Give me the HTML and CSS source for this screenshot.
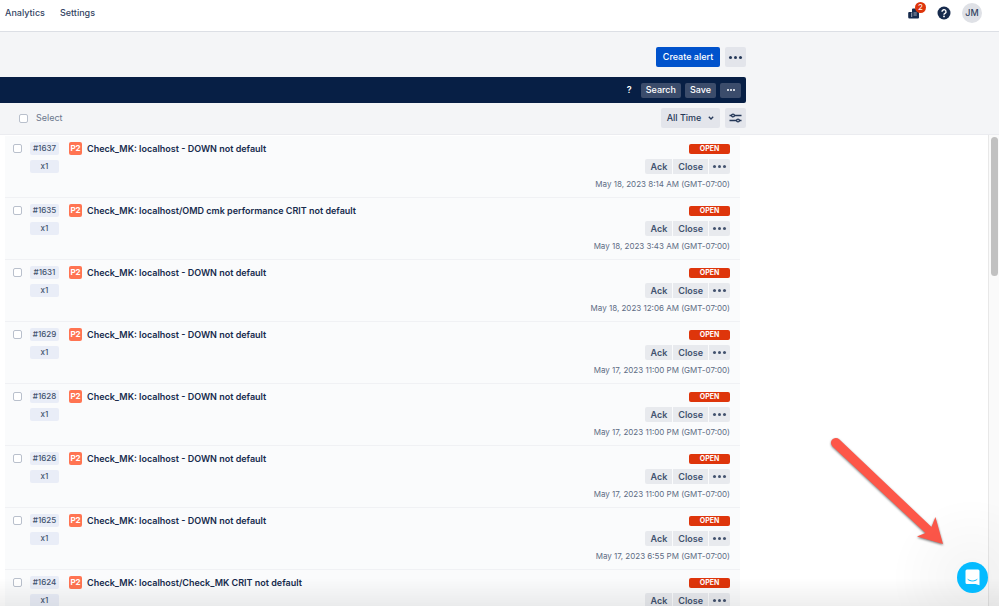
FILE: index.html
```html
<!DOCTYPE html>
<html lang="en">
<head>
  <meta charset="UTF-8">
  <title>Alerts</title>
  <link rel="stylesheet" href="styles.css">
</head>
<body>
  <header class="topbar">
    <nav class="nav">
      <a href="#">Analytics</a>
      <a href="#">Settings</a>
    </nav>
    <div class="user-area">
      <button class="icon-btn news" aria-label="What's new">
        <svg width="12" height="12" viewBox="0 0 12 12">
          <path fill="#172b4d" d="M4 2.500a1 1 0 0 1 1-1h5a1 1 0 0 1 1 1v8a1 1 0 0 1-1 1H1.500A1.300 1.300 0 0 1 .2 10.200V6a1 1 0 0 1 1-1H4z"/>
          <path stroke="#fff" stroke-width="0.600" fill="none" d="M3.700 5.500v4.500M5.500 6h3.300M5.500 8h3.300"/>
        </svg>
        <span class="count">2</span>
      </button>
      <button class="icon-btn" aria-label="Help">
        <svg width="14" height="14" viewBox="0 0 14 14">
          <circle cx="7" cy="7" r="6.500" fill="#172b4d"/>
          <path d="M5 5.700a2 2 0 1 1 3 1.700c-.7.4-1 .7-1 1.300" fill="none" stroke="#fff" stroke-width="1.400"/>
          <circle cx="7" cy="10.400" r="0.900" fill="#fff"/>
        </svg>
      </button>
      <button class="avatar">JM</button>
    </div>
  </header>

  <section class="toolbar">
    <div class="actions">
      <button class="btn primary">Create alert</button>
      <button class="btn square" aria-label="More"><span class="dots"></span></button>
    </div>
    <div class="searchbar">
      <button class="help">?</button>
      <button class="dark-btn">Search</button>
      <button class="dark-btn">Save</button>
      <button class="dark-btn more" aria-label="More"><span class="dots small"></span></button>
    </div>
    <div class="filters">
      <label class="select-all"><input type="checkbox"> Select</label>
      <button class="btn time">All Time
        <svg width="6" height="4" viewBox="0 0 6 4"><path d="M.8.800L3 3 5.200.800" fill="none" stroke="#253858" stroke-width="1.300"/></svg>
      </button>
      <button class="btn square" aria-label="Filters">
        <svg width="13" height="10" viewBox="0 0 13 10" fill="#e3e5eb" stroke="#253858" stroke-width="1.300">
          <path d="M.5 2.500h12M.5 7.500h12"/>
          <circle cx="4" cy="2.500" r="1.400"/>
          <circle cx="9" cy="7.500" r="1.400"/>
        </svg>
      </button>
    </div>
  </section>

  <main class="content">
    <ul class="alerts" id="alerts"></ul>
    <div class="scrollbar"><div class="thumb"></div></div>
  </main>

  <svg class="arrow" width="120" height="116" viewBox="0 0 120 116">
    <path fill="#fd5749" d="M9.200 3.200 101.500 91 105.400 81 113 108 87 100.500 95.500 97 2.600 10.500A4.800 4.800 0 0 1 9.200 3.200z"/>
  </svg>
  <div class="fade"></div>
  <button class="chat" aria-label="Open chat">
    <svg width="15" height="17" viewBox="0 0 15 17">
      <path fill="#fff" d="M2 .5h11A1.500 1.500 0 0 1 14.500 2v14.300L10.500 15H2A1.500 1.500 0 0 1 .5 13.500V2A1.500 1.500 0 0 1 2 .5z"/>
      <path d="M3 10.500c2.600 2 6.400 2 9 0" fill="none" stroke="#05bbff" stroke-width="1" stroke-linecap="round"/>
    </svg>
  </button>

  <script>
    const alerts = [
      { id: 1637, title: "Check_MK: localhost - DOWN not default", date: "May 18, 2023 8:14 AM" },
      { id: 1635, title: "Check_MK: localhost/OMD cmk performance CRIT not default", date: "May 18, 2023 3:43 AM" },
      { id: 1631, title: "Check_MK: localhost - DOWN not default", date: "May 18, 2023 12:06 AM" },
      { id: 1629, title: "Check_MK: localhost - DOWN not default", date: "May 17, 2023 11:00 PM" },
      { id: 1628, title: "Check_MK: localhost - DOWN not default", date: "May 17, 2023 11:00 PM" },
      { id: 1626, title: "Check_MK: localhost - DOWN not default", date: "May 17, 2023 11:00 PM" },
      { id: 1625, title: "Check_MK: localhost - DOWN not default", date: "May 17, 2023 6:55 PM" },
      { id: 1624, title: "Check_MK: localhost/Check_MK CRIT not default", date: "May 17, 2023 6:55 PM" }
    ];

    document.getElementById("alerts").innerHTML = alerts.map(a => `
      <li class="alert">
        <input type="checkbox" aria-label="Select alert ${a.id}">
        <div class="tags">
          <span class="tag">#${a.id}</span>
          <span class="tag">x1</span>
        </div>
        <span class="priority">P2</span>
        <span class="title">${a.title}</span>
        <div class="side">
          <span class="status">OPEN</span>
          <div class="row-actions">
            <button>Ack</button>
            <button>Close</button>
            <button aria-label="More"><span class="dots"></span></button>
          </div>
          <span class="date">${a.date} (GMT-07:00)</span>
        </div>
      </li>`).join("");
  </script>
</body>
</html>
```
FILE: styles.css
```css
* {
  box-sizing: border-box;
}
body {
  margin: 0;
  height: 100vh;
  display: flex;
  flex-direction: column;
  overflow: hidden;
  background: #fff;
  color: #172b4d;
  font-family: Inter, "Liberation Sans", sans-serif;
  font-size: 9px;
  line-height: 12px;
}
button {
  border: 0;
  padding: 0;
  background: none;
  color: inherit;
  font: inherit;
  cursor: pointer;
  display: flex;
  align-items: center;
  justify-content: center;
}
input[type="checkbox"] {
  appearance: none;
  flex: none;
  width: 9px;
  height: 9px;
  margin: 0;
  border: 1px solid #b9c0cc;
  border-radius: 2px;
  background: #fff;
}

/* top navigation */
.topbar {
  flex: none;
  display: flex;
  justify-content: space-between;
  height: 32px;
  padding: 0 17px 5px 5px;
  border-bottom: 1px solid #dcdfe5;
}
.nav, .user-area {
  display: flex;
  align-items: center;
}
.nav {
  gap: 15px;
}
.nav a {
  color: #344563;
  font-weight: 500;
  text-decoration: none;
}
.user-area {
  gap: 11px;
}
.icon-btn {
  position: relative;
}
.news {
  margin-right: 6px;
}
.count {
  position: absolute;
  left: 7px;
  top: -5px;
  width: 11px;
  height: 11px;
  border-radius: 50%;
  background: #de350b;
  color: #fff;
  font-size: 8px;
  line-height: 11px;
}
.avatar {
  width: 20px;
  height: 20px;
  border-radius: 50%;
  background: #dfe1e6;
  color: #344563;
  font-weight: 500;
}

/* search and filters */
.toolbar {
  flex: none;
  padding: 15px 253px 6px 0;
  background: #f4f5f7;
  border-bottom: 1px solid #ebecf0;
}
.actions, .filters {
  display: flex;
  justify-content: flex-end;
  gap: 5px;
}
.btn {
  height: 20px;
  border-radius: 2px;
  background: #e3e5eb;
  color: #253858;
  font-weight: 500;
}
.primary {
  width: 64px;
  background: #0052cc;
  color: #fff;
}
.square {
  width: 21px;
}
.time {
  width: 59px;
  gap: 7px;
}
.dots {
  width: 3px;
  height: 3px;
  border-radius: 50%;
  background: currentColor;
  box-shadow: -5px 0 currentColor, 5px 0 currentColor;
}
.dots.small {
  width: 2px;
  height: 2px;
  box-shadow: -3px 0 currentColor, 3px 0 currentColor;
}
.searchbar {
  display: flex;
  align-items: center;
  justify-content: flex-end;
  gap: 4px;
  height: 26px;
  margin: 10px 0 5px;
  padding-right: 5px;
  border-radius: 0 2px 2px 0;
  background: #071f45;
  color: #fff;
}
.help {
  margin-right: 5px;
  font-weight: 600;
}
.dark-btn {
  height: 15px;
  padding: 0 5px;
  border-radius: 2px;
  background: #3b4c6b;
  font-weight: 500;
}
.dark-btn.more {
  width: 21px;
}
.select-all {
  display: flex;
  align-items: center;
  gap: 8px;
  margin-right: auto;
  padding-left: 19px;
  color: #6b778c;
}

/* alert list */
.content {
  flex: 1;
  min-height: 0;
  display: flex;
  justify-content: space-between;
}
.alerts {
  flex: 1;
  margin: 1px 248px 0 5px;
  padding: 0;
  list-style: none;
  overflow: hidden;
}
.alert {
  display: flex;
  align-items: flex-start;
  height: 62px;
  padding: 6px 10px 0 8px;
  border-bottom: 1px solid #f0f1f4;
  background: #fafbfc;
}
.alert input {
  margin-top: 2px;
}
.tags {
  display: flex;
  flex-direction: column;
  gap: 5px;
  width: 29px;
  margin: 0 10px 0 8px;
}
.tag {
  height: 13px;
  border-radius: 2px;
  background: #e9edf7;
  color: #42526e;
  font-size: 8px;
  line-height: 13px;
  font-weight: 500;
  text-align: center;
}
.priority {
  width: 13px;
  height: 13px;
  border-radius: 2px;
  background: #ff7452;
  color: #fff;
  font-size: 8px;
  line-height: 13px;
  font-weight: 700;
  text-align: center;
}
.title {
  flex: 1;
  margin-left: 5px;
  line-height: 14px;
  font-weight: 600;
}
.side {
  display: flex;
  flex-direction: column;
  align-items: flex-end;
  padding-top: 2px;
}
.status {
  width: 41px;
  height: 10px;
  border-radius: 2px;
  background: #de350b;
  color: #fff;
  font-size: 7px;
  line-height: 10px;
  font-weight: 700;
  text-align: center;
}
.row-actions {
  display: flex;
  gap: 1px;
  margin: 5px 0 4px;
}
.row-actions button {
  height: 15px;
  padding: 0 5px;
  background: #e8eaee;
  color: #42526e;
  font-weight: 600;
}
.row-actions button:first-child {
  border-radius: 2px 0 0 2px;
}
.row-actions button:last-child {
  width: 21px;
  border-radius: 0 2px 2px 0;
}
.date {
  color: #5e6c84;
  font-size: 8px;
}
.scrollbar {
  flex: none;
  width: 11px;
  padding: 2px 1px 0 2px;
  border-left: 1px solid #e8e8e8;
  background: #fafafa;
}
.thumb {
  height: 139px;
  border-radius: 4px;
  background: #c1c1c1;
}

/* overlays */
.arrow {
  position: fixed;
  right: 49px;
  bottom: 54px;
  filter: drop-shadow(0 1px 1px #00000088);
}
.fade {
  position: fixed;
  inset: auto 0 0 0;
  height: 240px;
  background:
    radial-gradient(circle at calc(100% - 27px) calc(100% - 28px), #0000000a, #00000000 80px),
    linear-gradient(to top, #00000010, #00000000 28px);
  pointer-events: none;
}
.chat {
  position: fixed;
  right: 11px;
  bottom: 13px;
  width: 31px;
  height: 31px;
  border-radius: 50%;
  background: #05bbff;
}
```
